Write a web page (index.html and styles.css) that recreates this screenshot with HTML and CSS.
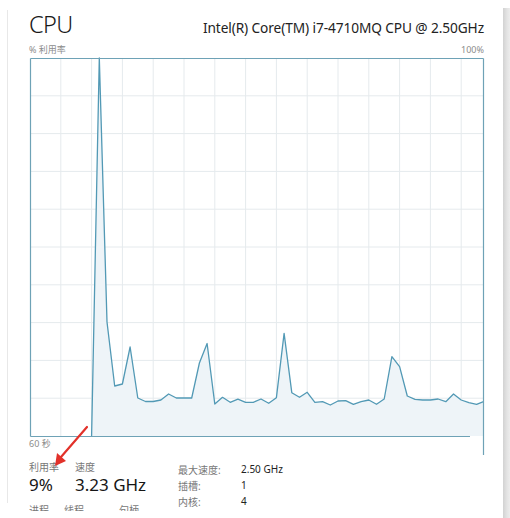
FILE: index.html
```html
<!DOCTYPE html>
<html lang="zh">
<head>
<meta charset="utf-8">
<title>CPU</title>
<link rel="stylesheet" href="styles.css">
</head>
<body>
<div class="window">
  <div class="panel">
    <header class="head">
      <h1 class="title">CPU</h1>
      <div class="model">Intel(R) Core(TM) i7-4710MQ CPU @ 2.50GHz</div>
    </header>
    <div class="axis axis-top"><span>% 利用率</span><span>100%</span></div>
    <svg class="chart" width="456" height="380" viewBox="29 57 456 380">
      <g class="grid">
        <line x1="60.8" y1="58" x2="60.8" y2="436"/>
        <line x1="91.6" y1="58" x2="91.6" y2="436"/>
        <line x1="122.4" y1="58" x2="122.4" y2="436"/>
        <line x1="153.2" y1="58" x2="153.2" y2="436"/>
        <line x1="184" y1="58" x2="184" y2="436"/>
        <line x1="214.8" y1="58" x2="214.8" y2="436"/>
        <line x1="245.6" y1="58" x2="245.6" y2="436"/>
        <line x1="276.4" y1="58" x2="276.4" y2="436"/>
        <line x1="307.2" y1="58" x2="307.2" y2="436"/>
        <line x1="338" y1="58" x2="338" y2="436"/>
        <line x1="368.8" y1="58" x2="368.8" y2="436"/>
        <line x1="399.6" y1="58" x2="399.6" y2="436"/>
        <line x1="430.4" y1="58" x2="430.4" y2="436"/>
        <line x1="461.2" y1="58" x2="461.2" y2="436"/>
        <line x1="30" y1="95.8" x2="484" y2="95.8"/>
        <line x1="30" y1="133.6" x2="484" y2="133.6"/>
        <line x1="30" y1="171.4" x2="484" y2="171.4"/>
        <line x1="30" y1="209.2" x2="484" y2="209.2"/>
        <line x1="30" y1="247" x2="484" y2="247"/>
        <line x1="30" y1="284.8" x2="484" y2="284.8"/>
        <line x1="30" y1="322.6" x2="484" y2="322.6"/>
        <line x1="30" y1="360.4" x2="484" y2="360.4"/>
        <line x1="30" y1="398.2" x2="484" y2="398.2"/>
      </g>
      <polygon class="area" points="91.6,436 99.3,58 107,322 114.7,386 122.4,384 130.1,347 137.8,398 145.5,401.5 153.2,401.5 160.9,400 168.6,394 176.3,398 184,398 191.7,398 199.4,363 207.1,343.5 214.8,404 222.5,397.3 230.2,402.3 237.9,399.2 245.6,402.3 253.3,402.3 261,399 268.7,403.3 276.4,397.7 284.1,333.3 291.8,392.7 299.5,397.3 307.2,392.3 314.9,402.3 322.6,401.7 330.3,405 338,401 345.7,400.7 353.4,404.3 361.1,401.7 368.8,400 376.5,404.3 384.2,399 391.9,356.7 399.6,366.7 407.3,396 415,399.3 422.7,400 430.4,400 438.1,399 445.8,401.7 453.5,394 461.2,400 468.9,402.7 476.6,404.3 483.5,401.7 483.5,436"/>
      <polyline class="line" points="91.6,436 99.3,58 107,322 114.7,386 122.4,384 130.1,347 137.8,398 145.5,401.5 153.2,401.5 160.9,400 168.6,394 176.3,398 184,398 191.7,398 199.4,363 207.1,343.5 214.8,404 222.5,397.3 230.2,402.3 237.9,399.2 245.6,402.3 253.3,402.3 261,399 268.7,403.3 276.4,397.7 284.1,333.3 291.8,392.7 299.5,397.3 307.2,392.3 314.9,402.3 322.6,401.7 330.3,405 338,401 345.7,400.7 353.4,404.3 361.1,401.7 368.8,400 376.5,404.3 384.2,399 391.9,356.7 399.6,366.7 407.3,396 415,399.3 422.7,400 430.4,400 438.1,399 445.8,401.7 453.5,394 461.2,400 468.9,402.7 476.6,404.3 483.5,401.7"/>
      <g class="frame">
        <line x1="30.5" y1="58.5" x2="483.5" y2="58.5"/>
        <line x1="30.5" y1="58.5" x2="30.5" y2="436.5"/>
        <line x1="30.5" y1="436.5" x2="470" y2="436.5"/>
        <line x1="483.5" y1="58.5" x2="483.5" y2="455"/>
      </g>
    </svg>
    <div class="axis axis-bottom">60 秒</div>
    <div class="stats">
      <div class="live">
        <div class="live-row">
          <div class="stat stat-util"><div class="label">利用率</div><div class="value">9%</div></div>
          <div class="stat"><div class="label">速度</div><div class="value">3.23 GHz</div></div>
        </div>
        <div class="live-row counts">
          <div class="label c1">进程</div>
          <div class="label c2">线程</div>
          <div class="label">句柄</div>
        </div>
      </div>
      <div class="specs">
        <div class="spec-label">最大速度:</div><div class="spec-value">2.50 GHz</div>
        <div class="spec-label">插槽:</div><div class="spec-value">1</div>
        <div class="spec-label">内核:</div><div class="spec-value">4</div>
      </div>
    </div>
  </div>
  <div class="scrollbar"></div>
  <svg class="arrow" width="510" height="518" viewBox="0 0 510 518">
    <line x1="87" y1="427" x2="61" y2="457"/>
    <polygon points="55,466 57,453 66,461"/>
  </svg>
</div>
</body>
</html>
```

FILE: styles.css
```css
html, body {
  margin: 0;
  padding: 0;
  background: #ffffff;
}

body {
  font-family: "Noto Sans", "Noto Sans CJK SC", sans-serif;
  color: #1d1d1d;
}

.window {
  position: relative;
  width: 510px;
  height: 518px;
  overflow: hidden;
  display: flex;
}

.window::before {
  content: "";
  position: absolute;
  left: 7px;
  top: 10px;
  bottom: 15px;
  width: 1px;
  background: #e8e8e8;
}

.panel {
  flex: 1;
  display: flex;
  flex-direction: column;
  padding: 10px 19px 0 29px;
  min-width: 0;
}

.scrollbar {
  width: 7px;
  margin-top: 8px;
  background: linear-gradient(90deg, #d2d2d2, #e4e4e4 60%, #ececec);
}

.head {
  display: flex;
  justify-content: space-between;
  align-items: baseline;
  height: 28px;
}

.title {
  margin: 0;
  font-size: 23.5px;
  line-height: 28px;
  font-weight: 300;
  letter-spacing: -0.6px;
  color: #1a1a1a;
}

.model {
  font-size: 13.7px;
  color: #222222;
  letter-spacing: -0.1px;
}

.axis {
  font-size: 9px;
  line-height: 14px;
  color: #8c8c8c;
}

.axis-top {
  display: flex;
  justify-content: space-between;
  margin-top: 5px;
}

.chart {
  display: block;
  overflow: visible;
}

.grid line {
  stroke: #e5eaed;
  stroke-width: 1;
}

.area {
  fill: #eef4f8;
  stroke: none;
}

.line {
  fill: none;
  stroke: #5299b5;
  stroke-width: 1.3;
  stroke-linejoin: round;
}

.frame line {
  stroke: #6ea2b6;
  stroke-width: 1.2;
}

.stats {
  display: flex;
  margin-top: 10px;
}

.live {
  width: 149px;
  display: flex;
  flex-direction: column;
}

.live-row {
  display: flex;
}

.stat-util {
  width: 46px;
}

.label {
  font-size: 10px;
  line-height: 13px;
  color: #777777;
}

.value {
  font-size: 17px;
  line-height: 20px;
  margin-top: 1px;
  color: #151515;
}

.counts {
  margin-top: 9px;
  height: 7px;
  overflow: hidden;
}

.c1 {
  width: 35px;
}

.c2 {
  width: 55px;
}

.specs {
  display: grid;
  grid-template-columns: 63px auto;
  grid-auto-rows: 16px;
  align-items: center;
  font-size: 10px;
  margin-top: 0;
}

.spec-label {
  color: #777777;
}

.spec-value {
  color: #222222;
}

.arrow {
  position: absolute;
  left: 0;
  top: 0;
  pointer-events: none;
}

.arrow line {
  stroke: #e2312a;
  stroke-width: 2.2;
  stroke-linecap: round;
}

.arrow polygon {
  fill: #e2312a;
}
```
